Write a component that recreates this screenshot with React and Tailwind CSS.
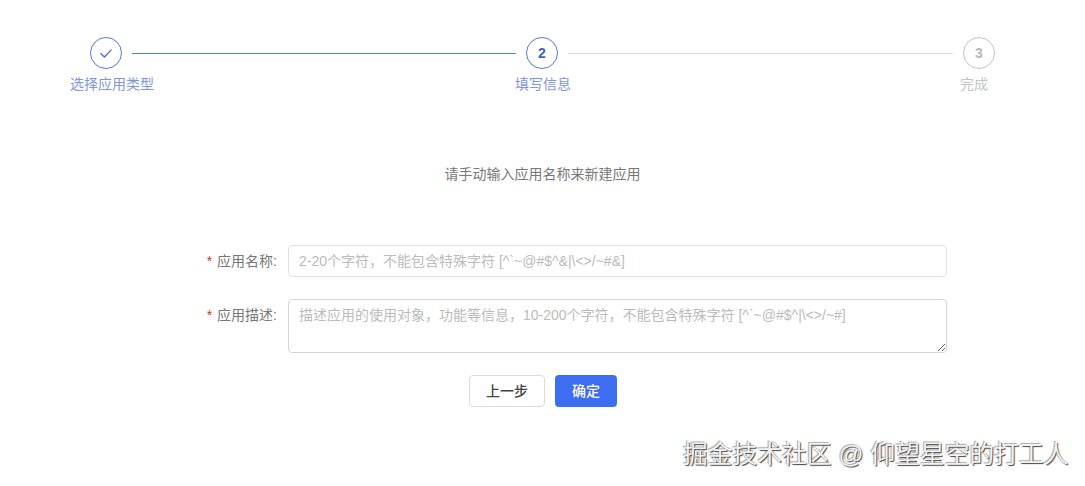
import React from "react";

const font = "[font-family:'Liberation_Sans','Noto_Sans_CJK_SC',sans-serif]";

function Field({ label, children, className }) {
  return (
    <div className={"flex items-start " + className}>
      <label className="w-[288px] pr-[11px] h-[32px] leading-[32px] text-right text-[14px] text-[#777]">
        <span className="text-[#c0392b] mr-[5px]">*</span>
        {label}
      </label>
      {children}
    </div>
  );
}

export default function App() {
  return (
    <div className={"relative w-[1085px] h-[486px] bg-white overflow-hidden " + font}>
      <div className="flex items-center pt-[37px] pl-[90px] pr-[90px]">
        <div className="w-[32px] h-[32px] shrink-0 rounded-full border border-[#5578d4] flex items-center justify-center">
          <svg width="14" height="14" viewBox="0 0 14 14" fill="none" stroke="#4a70c8" strokeWidth="1.3">
            <path d="M1.5 7.2 L5.4 11 L12.5 3.6" />
          </svg>
        </div>
        <div className="w-[384px] h-px bg-[#4d84cc] mx-[10px]" />
        <div className="w-[32px] h-[32px] shrink-0 rounded-full border border-[#5578d4] flex items-center justify-center text-[14px] font-bold text-[#3f66c4]">
          2
        </div>
        <div className="flex-1 h-px bg-[#dcdcdc] mx-[10px]" />
        <div className="w-[32px] h-[32px] shrink-0 rounded-full border border-[#c4c4c4] flex items-center justify-center text-[14px] font-bold text-[#b8b8b8]">
          3
        </div>
      </div>
      <div className="flex mt-[5px] text-[14px] leading-[20px]">
        <span className="ml-[70px] text-[#7f95dc]">选择应用类型</span>
        <span className="ml-[361px] text-[#7f95dc]">填写信息</span>
        <span className="ml-[389px] text-[#c4c4c4]">完成</span>
      </div>

      <p className="mt-[70px] text-center text-[14px] leading-[20px] text-[#777]">请手动输入应用名称来新建应用</p>

      <Field label="应用名称:" className="mt-[61px]">
        <input
          readOnly
          placeholder="2-20个字符，不能包含特殊字符 [^`~@#$^&|\<>/~#&]"
          className="w-[659px] h-[32px] px-[10px] text-[14px] bg-white border border-[#dfe1ee] rounded-[4px] outline-none placeholder:text-[#bbb]"
        />
      </Field>
      <Field label="应用描述:" className="mt-[22px]">
        <textarea
          readOnly
          placeholder="描述应用的使用对象，功能等信息，10-200个字符，不能包含特殊字符 [^`~@#$^|\<>/~#]"
          className="w-[659px] h-[54px] px-[10px] py-[5px] text-[14px] leading-[20px] bg-white border border-[#d5d5d8] rounded-[4px] outline-none placeholder:text-[#bbb]"
        />
      </Field>

      <div className="flex mt-[22px] ml-[469px] gap-[10px]">
        <button className="w-[76px] h-[32px] rounded-[4px] border border-[#dcdcdc] bg-white text-[14px] font-medium text-[#444]">
          上一步
        </button>
        <button className="w-[62px] h-[32px] rounded-[4px] bg-[#3d6df0] text-[14px] font-medium text-white">
          确定
        </button>
      </div>

      <div className="absolute left-[683px] top-[438px] text-[24.75px] leading-[34px] whitespace-nowrap text-[#f2f2f2] [text-shadow:1px_1px_1px_#444,-1px_-1px_1px_#aaa]">
        掘金技术社区 @ 仰望星空的打工人
      </div>
    </div>
  );
}
